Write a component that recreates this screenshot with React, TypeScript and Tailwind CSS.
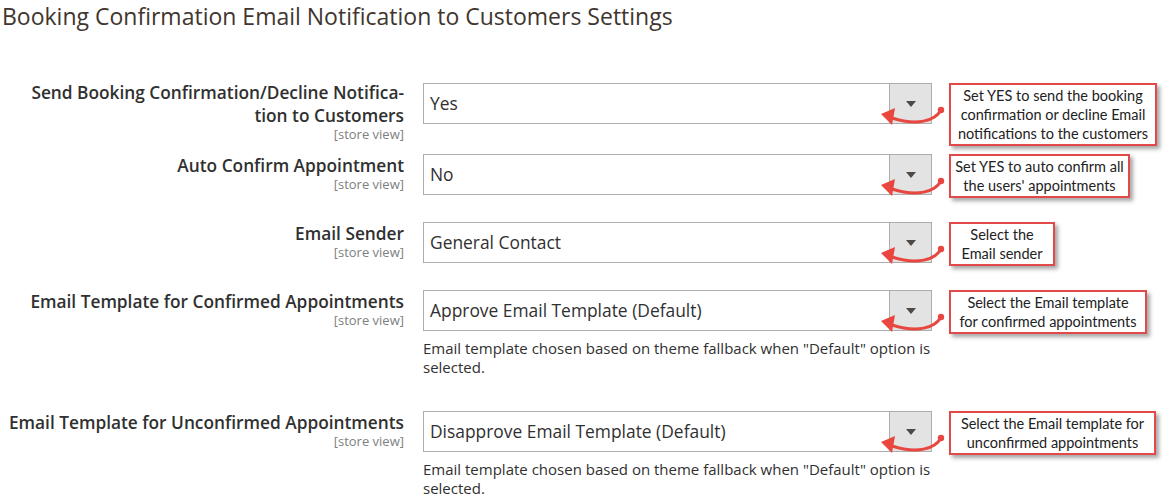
import React from 'react';

interface Row {
  label: React.ReactNode;
  value: string;
  note?: boolean;
  tip: string[];
  tipWidth: string;
  height: string;
  labelOffset?: string;
}

const rows: Row[] = [
  {
    label: (
      <>
        Send Booking Confirmation/Decline Notifica-
        <br />
        tion to Customers
      </>
    ),
    value: 'Yes',
    tip: ['Set YES to send the booking', 'confirmation or decline Email', 'notifications to the customers'],
    tipWidth: 'w-[208px]',
    height: 'h-[71px]',
    labelOffset: '-mt-[2px]',
  },
  {
    label: 'Auto Confirm Appointment',
    value: 'No',
    tip: ['Set YES to auto confirm all', "the users' appointments"],
    tipWidth: 'w-[181px]',
    height: 'h-[68px]',
  },
  {
    label: 'Email Sender',
    value: 'General Contact',
    tip: ['Select the', 'Email sender'],
    tipWidth: 'w-[106px]',
    height: 'h-[68px]',
  },
  {
    label: 'Email Template for Confirmed Appointments',
    value: 'Approve Email Template (Default)',
    note: true,
    tip: ['Select the Email template', 'for confirmed appointments'],
    tipWidth: 'w-[198px]',
    height: 'h-[121px]',
  },
  {
    label: 'Email Template for Unconfirmed Appointments',
    value: 'Disapprove Email Template (Default)',
    note: true,
    tip: ['Select the Email template for', 'unconfirmed appointments'],
    tipWidth: 'w-[207px]',
    height: 'h-[80px]',
  },
];

function Pointer() {
  return (
    <svg
      className="absolute left-[456px] top-[22px]"
      width="66"
      height="24"
      viewBox="0 0 66 24"
    >
      <path
        d="M62 5 C56 16, 38 21, 13 13"
        fill="none"
        stroke="#e8463f"
        strokeWidth="3"
        strokeLinecap="round"
      />
      <circle cx="62" cy="5" r="3.2" fill="#e8463f" />
      <polygon points="2,9 16,3 13,20" fill="#e8463f" />
    </svg>
  );
}

export default function App() {
  return (
    <div className="w-[1173px] h-[498px] overflow-hidden bg-white font-['Open_Sans',sans-serif] text-[#303030]">
      <h1 className="pl-[2px] pt-[1px] h-[83px] text-[23px] leading-[30px] text-[#41362f]">
        Booking Confirmation Email Notification to Customers Settings
      </h1>
      {rows.map((row, i) => (
        <div key={i} className={`flex items-start ${row.height}`}>
          <div className={`w-[404px] shrink-0 text-right ${row.labelOffset ?? ''}`}>
            <div className="text-[17.3px] leading-[23px] font-semibold whitespace-nowrap">{row.label}</div>
            <div className="text-[13px] leading-[14px] text-[#808080]">[store view]</div>
          </div>
          <div className="relative ml-[19px] w-[509px] shrink-0">
            <div className="flex h-[41px] border border-[#adadad] bg-white">
              <div className="flex-1 pl-[6px] text-[17.4px] leading-[39px]">{row.value}</div>
              <div className="flex w-[42px] items-center justify-center border-l border-[#adadad] bg-[#e3e3e3]">
                <div className="h-0 w-0 border-x-[5px] border-t-[6px] border-x-transparent border-t-[#514943]" />
              </div>
            </div>
            {row.note && (
              <p className="mt-[8px] text-[15px] leading-[19px]">
                Email template chosen based on theme fallback when "Default" option is selected.
              </p>
            )}
            <Pointer />
          </div>
          <div
            className={`ml-[17px] ${row.tipWidth} border-[2.5px] border-[#e24a4a] bg-white py-[1px] text-center font-['Lato',sans-serif] text-[14.5px] leading-[19px] text-[#222] shadow-[3px_3px_4px_rgba(0,0,0,0.35)]`}
          >
            {row.tip.map((line, j) => (
              <div key={j} className="whitespace-nowrap">
                {line}
              </div>
            ))}
          </div>
        </div>
      ))}
    </div>
  );
}
